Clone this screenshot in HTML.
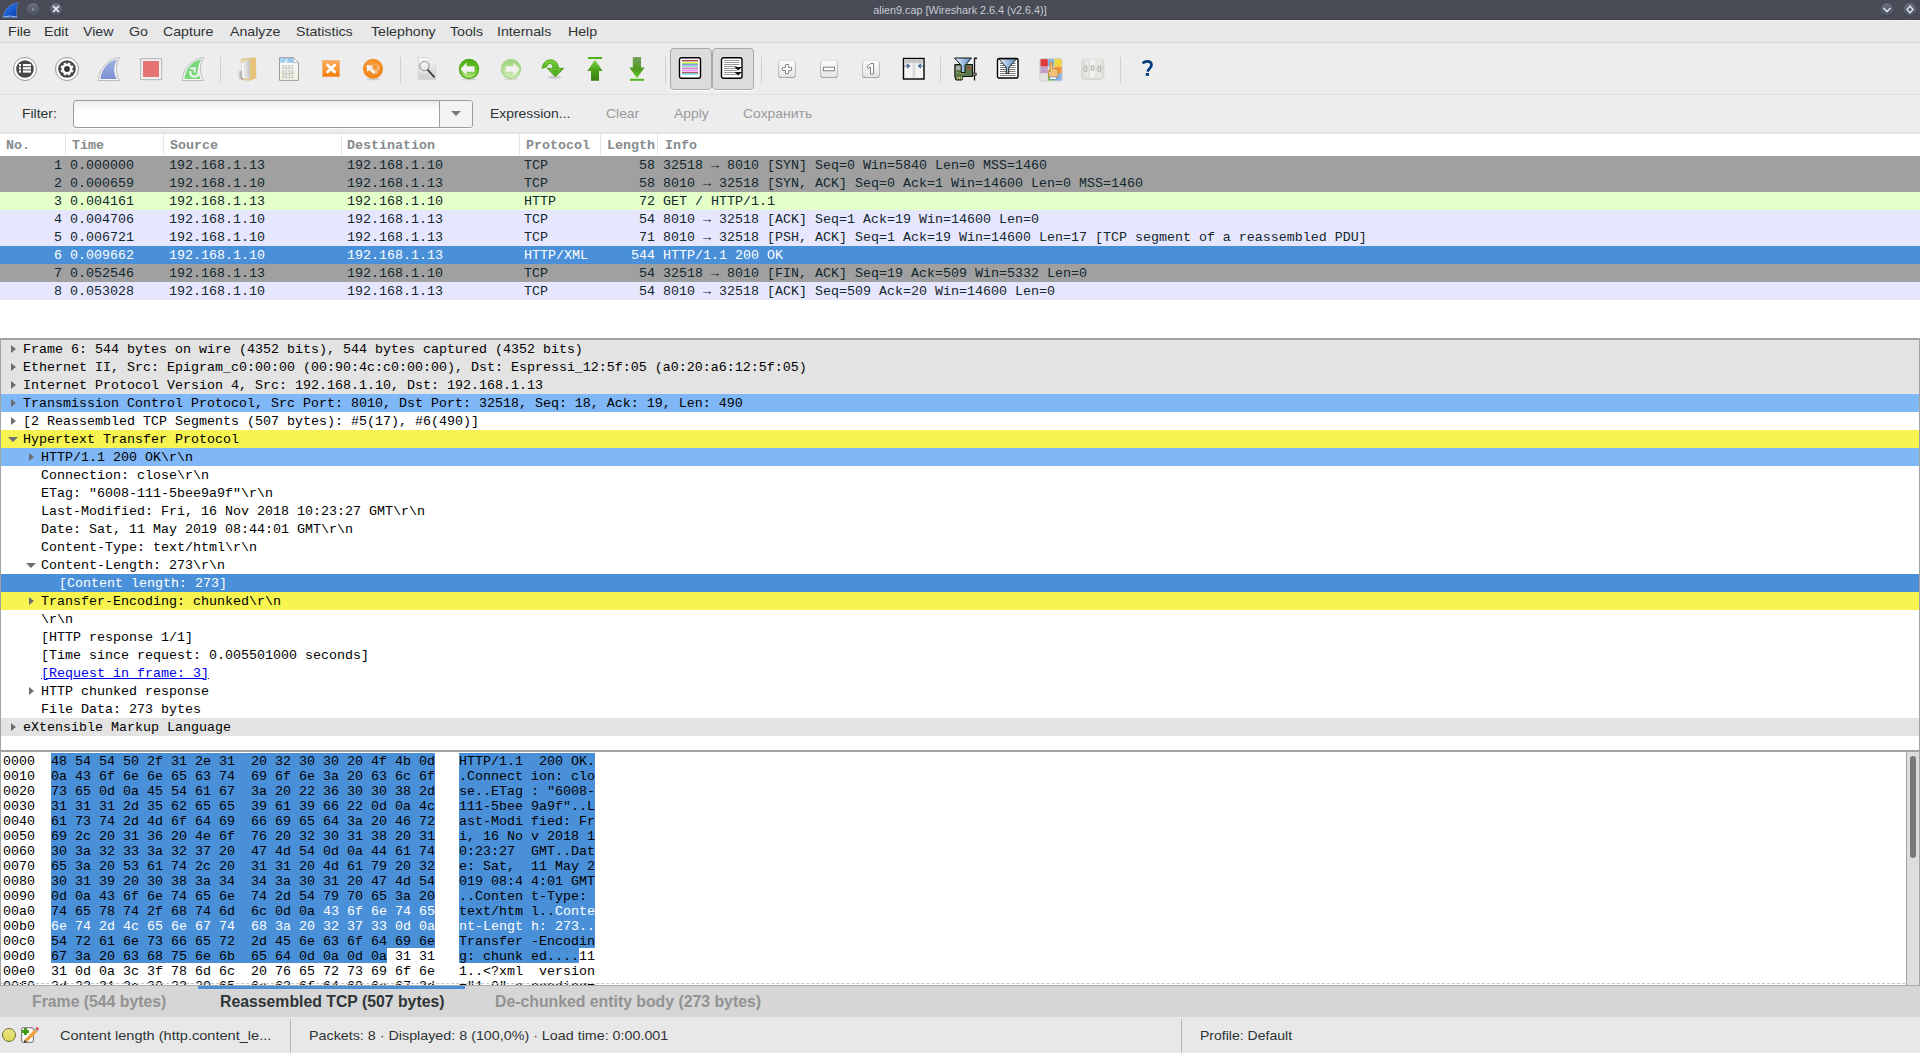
<!DOCTYPE html><html><head><meta charset="utf-8"><title>Wireshark</title><style>
*{margin:0;padding:0;box-sizing:border-box}
html,body{width:1920px;height:1053px;overflow:hidden;background:#ededed;font-family:'Liberation Sans', sans-serif;}
.a{position:absolute}
.t{position:absolute;white-space:pre;line-height:1}
.ui{font-family:'Liberation Sans', sans-serif;font-size:13px;color:#2e3436;transform:scaleX(1.07);transform-origin:0 0}
.mono{font-family:'Liberation Mono', monospace;font-size:13.33px}
.row{position:absolute;left:0;width:1920px;height:18px}
.cell{position:absolute;top:1px;height:18px;line-height:18px;white-space:pre;font-family:'Liberation Mono', monospace;font-size:13.33px;color:#12272e}
.dt{position:absolute;left:1px;width:1918px;height:18px}
.dtx{position:absolute;top:1px;line-height:18px;white-space:pre;font-family:'Liberation Mono', monospace;font-size:13.33px;color:#000}
.hx{position:absolute;left:3px;height:15px;line-height:15px;white-space:pre;font-family:'Liberation Mono', monospace;font-size:13.33px;color:#000}
</style></head><body>
<div class="a" style="left:0;top:0;width:1920px;height:20px;background:#494c57"></div>
<div class="a" style="left:0;top:19px;width:1920px;height:1px;background:#41444e"></div>
<div class="a" style="left:0;top:20px;width:1920px;height:1px;background:#f3f3f3"></div>
<div class="t" style="left:0;top:5px;width:1920px;text-align:center;font-size:10.8px;color:#c6cad2;font-family:'Liberation Sans', sans-serif">alien9.cap [Wireshark 2.6.4 (v2.6.4)]</div>
<div class="a" style="left:0;top:21px;width:1920px;height:21px;background:#e8e8e8"></div>
<div class="a" style="left:0;top:42px;width:1920px;height:1px;background:#d6d6d6"></div>
<div class="t ui" style="left:8px;top:25px;transform:scaleX(1.09)">File</div>
<div class="t ui" style="left:44px;top:25px;transform:scaleX(1.09)">Edit</div>
<div class="t ui" style="left:83px;top:25px;transform:scaleX(1.09)">View</div>
<div class="t ui" style="left:129px;top:25px;transform:scaleX(1.09)">Go</div>
<div class="t ui" style="left:163px;top:25px;transform:scaleX(1.09)">Capture</div>
<div class="t ui" style="left:230px;top:25px;transform:scaleX(1.09)">Analyze</div>
<div class="t ui" style="left:296px;top:25px;transform:scaleX(1.09)">Statistics</div>
<div class="t ui" style="left:371px;top:25px;transform:scaleX(1.09)">Telephony</div>
<div class="t ui" style="left:450px;top:25px;transform:scaleX(1.09)">Tools</div>
<div class="t ui" style="left:497px;top:25px;transform:scaleX(1.09)">Internals</div>
<div class="t ui" style="left:568px;top:25px;transform:scaleX(1.09)">Help</div>
<div class="a" style="left:0;top:43px;width:1920px;height:51px;background:#ededed"></div>
<div class="a" style="left:0;top:94px;width:1920px;height:1px;background:#e2e2e2"></div>
<div class="a" style="left:220px;top:57px;width:1px;height:26px;background:#cfcfcf"></div>
<div class="a" style="left:400px;top:57px;width:1px;height:26px;background:#cfcfcf"></div>
<div class="a" style="left:665px;top:57px;width:1px;height:26px;background:#cfcfcf"></div>
<div class="a" style="left:761px;top:57px;width:1px;height:26px;background:#cfcfcf"></div>
<div class="a" style="left:940px;top:57px;width:1px;height:26px;background:#cfcfcf"></div>
<div class="a" style="left:1120px;top:57px;width:1px;height:26px;background:#cfcfcf"></div>
<div class="a" style="left:0;top:95px;width:1920px;height:38px;background:#ededed"></div>
<div class="a" style="left:0;top:132px;width:1920px;height:2px;background:#e4e4e4"></div>
<div class="t ui" style="left:22px;top:107px">Filter:</div>
<div class="a" style="left:73px;top:100px;width:400px;height:28px;border:1px solid #9d9d9d;border-radius:3px;background:linear-gradient(#ececec,#fbfbfb 30%,#ffffff 80%);box-shadow:0 1px 0 #fafafa"></div>
<div class="a" style="left:440px;top:101px;width:32px;height:26px;background:#f3f3f3;border-radius:0 2px 2px 0"></div>
<div class="a" style="left:439px;top:101px;width:1px;height:26px;background:#9d9d9d"></div>
<div class="a" style="left:451px;top:111px;width:0;height:0;border-left:5px solid transparent;border-right:5px solid transparent;border-top:5px solid #7b7b7b"></div>
<div class="t ui" style="left:490px;top:107px">Expression...</div>
<div class="t ui" style="left:606px;top:107px;color:#9a9a9a">Clear</div>
<div class="t ui" style="left:674px;top:107px;color:#9a9a9a">Apply</div>
<div class="t ui" style="left:743px;top:107px;color:#9a9a9a">Сохранить</div>
<div class="a" style="left:0;top:134px;width:1920px;height:204px;background:#fff"></div>
<div class="t mono" style="left:6px;top:139px;font-weight:bold;color:#858b8d">No.</div>
<div class="t mono" style="left:72px;top:139px;font-weight:bold;color:#858b8d">Time</div>
<div class="t mono" style="left:170px;top:139px;font-weight:bold;color:#858b8d">Source</div>
<div class="t mono" style="left:347px;top:139px;font-weight:bold;color:#858b8d">Destination</div>
<div class="t mono" style="left:526px;top:139px;font-weight:bold;color:#858b8d">Protocol</div>
<div class="t mono" style="left:607px;top:139px;font-weight:bold;color:#858b8d">Length</div>
<div class="t mono" style="left:665px;top:139px;font-weight:bold;color:#858b8d">Info</div>
<div class="a" style="left:65px;top:134px;width:1px;height:21px;background:#e6e6e6"></div>
<div class="a" style="left:163px;top:134px;width:1px;height:21px;background:#e6e6e6"></div>
<div class="a" style="left:341px;top:134px;width:1px;height:21px;background:#e6e6e6"></div>
<div class="a" style="left:519px;top:134px;width:1px;height:21px;background:#e6e6e6"></div>
<div class="a" style="left:600px;top:134px;width:1px;height:21px;background:#e6e6e6"></div>
<div class="a" style="left:657px;top:134px;width:1px;height:21px;background:#e6e6e6"></div>
<div class="row" style="top:156px;background:#a0a0a0">
<div class="cell" style="right:1858px;color:#12272e">1</div>
<div class="cell" style="left:70px;color:#12272e">0.000000</div>
<div class="cell" style="left:169px;color:#12272e">192.168.1.13</div>
<div class="cell" style="left:347px;color:#12272e">192.168.1.10</div>
<div class="cell" style="left:524px;color:#12272e">TCP</div>
<div class="cell" style="right:1265px;color:#12272e">58</div>
<div class="cell" style="left:663px;color:#12272e">32518 → 8010 [SYN] Seq=0 Win=5840 Len=0 MSS=1460</div>
</div>
<div class="row" style="top:174px;background:#a0a0a0">
<div class="cell" style="right:1858px;color:#12272e">2</div>
<div class="cell" style="left:70px;color:#12272e">0.000659</div>
<div class="cell" style="left:169px;color:#12272e">192.168.1.10</div>
<div class="cell" style="left:347px;color:#12272e">192.168.1.13</div>
<div class="cell" style="left:524px;color:#12272e">TCP</div>
<div class="cell" style="right:1265px;color:#12272e">58</div>
<div class="cell" style="left:663px;color:#12272e">8010 → 32518 [SYN, ACK] Seq=0 Ack=1 Win=14600 Len=0 MSS=1460</div>
</div>
<div class="row" style="top:192px;background:#e4ffc7">
<div class="cell" style="right:1858px;color:#12272e">3</div>
<div class="cell" style="left:70px;color:#12272e">0.004161</div>
<div class="cell" style="left:169px;color:#12272e">192.168.1.13</div>
<div class="cell" style="left:347px;color:#12272e">192.168.1.10</div>
<div class="cell" style="left:524px;color:#12272e">HTTP</div>
<div class="cell" style="right:1265px;color:#12272e">72</div>
<div class="cell" style="left:663px;color:#12272e">GET / HTTP/1.1</div>
</div>
<div class="row" style="top:210px;background:#e7e6ff">
<div class="cell" style="right:1858px;color:#12272e">4</div>
<div class="cell" style="left:70px;color:#12272e">0.004706</div>
<div class="cell" style="left:169px;color:#12272e">192.168.1.10</div>
<div class="cell" style="left:347px;color:#12272e">192.168.1.13</div>
<div class="cell" style="left:524px;color:#12272e">TCP</div>
<div class="cell" style="right:1265px;color:#12272e">54</div>
<div class="cell" style="left:663px;color:#12272e">8010 → 32518 [ACK] Seq=1 Ack=19 Win=14600 Len=0</div>
</div>
<div class="row" style="top:228px;background:#e7e6ff">
<div class="cell" style="right:1858px;color:#12272e">5</div>
<div class="cell" style="left:70px;color:#12272e">0.006721</div>
<div class="cell" style="left:169px;color:#12272e">192.168.1.10</div>
<div class="cell" style="left:347px;color:#12272e">192.168.1.13</div>
<div class="cell" style="left:524px;color:#12272e">TCP</div>
<div class="cell" style="right:1265px;color:#12272e">71</div>
<div class="cell" style="left:663px;color:#12272e">8010 → 32518 [PSH, ACK] Seq=1 Ack=19 Win=14600 Len=17 [TCP segment of a reassembled PDU]</div>
</div>
<div class="row" style="top:246px;background:#4a90d9">
<div class="cell" style="right:1858px;color:#ffffff">6</div>
<div class="cell" style="left:70px;color:#ffffff">0.009662</div>
<div class="cell" style="left:169px;color:#ffffff">192.168.1.10</div>
<div class="cell" style="left:347px;color:#ffffff">192.168.1.13</div>
<div class="cell" style="left:524px;color:#ffffff">HTTP/XML</div>
<div class="cell" style="right:1265px;color:#ffffff">544</div>
<div class="cell" style="left:663px;color:#ffffff">HTTP/1.1 200 OK</div>
</div>
<div class="row" style="top:264px;background:#a0a0a0">
<div class="cell" style="right:1858px;color:#12272e">7</div>
<div class="cell" style="left:70px;color:#12272e">0.052546</div>
<div class="cell" style="left:169px;color:#12272e">192.168.1.13</div>
<div class="cell" style="left:347px;color:#12272e">192.168.1.10</div>
<div class="cell" style="left:524px;color:#12272e">TCP</div>
<div class="cell" style="right:1265px;color:#12272e">54</div>
<div class="cell" style="left:663px;color:#12272e">32518 → 8010 [FIN, ACK] Seq=19 Ack=509 Win=5332 Len=0</div>
</div>
<div class="row" style="top:282px;background:#e7e6ff">
<div class="cell" style="right:1858px;color:#12272e">8</div>
<div class="cell" style="left:70px;color:#12272e">0.053028</div>
<div class="cell" style="left:169px;color:#12272e">192.168.1.10</div>
<div class="cell" style="left:347px;color:#12272e">192.168.1.13</div>
<div class="cell" style="left:524px;color:#12272e">TCP</div>
<div class="cell" style="right:1265px;color:#12272e">54</div>
<div class="cell" style="left:663px;color:#12272e">8010 → 32518 [ACK] Seq=509 Ack=20 Win=14600 Len=0</div>
</div>
<div class="a" style="left:0;top:338px;width:1920px;height:2px;background:#a3a3a3"></div>
<div class="a" style="left:0;top:340px;width:1920px;height:411px;background:#fff;border-left:1px solid #a3a3a3;border-right:1px solid #a3a3a3"></div>
<div class="dt" style="top:340px;background:#e3e3e3">
<div class="a" style="left:9.5px;top:4.5px;width:0;height:0;border-top:4.6px solid transparent;border-bottom:4.6px solid transparent;border-left:5.2px solid #6b6f72"></div>
<div class="dtx" style="left:22px;color:#000">Frame 6: 544 bytes on wire (4352 bits), 544 bytes captured (4352 bits)</div>
</div>
<div class="dt" style="top:358px;background:#e3e3e3">
<div class="a" style="left:9.5px;top:4.5px;width:0;height:0;border-top:4.6px solid transparent;border-bottom:4.6px solid transparent;border-left:5.2px solid #6b6f72"></div>
<div class="dtx" style="left:22px;color:#000">Ethernet II, Src: Epigram_c0:00:00 (00:90:4c:c0:00:00), Dst: Espressi_12:5f:05 (a0:20:a6:12:5f:05)</div>
</div>
<div class="dt" style="top:376px;background:#e3e3e3">
<div class="a" style="left:9.5px;top:4.5px;width:0;height:0;border-top:4.6px solid transparent;border-bottom:4.6px solid transparent;border-left:5.2px solid #6b6f72"></div>
<div class="dtx" style="left:22px;color:#000">Internet Protocol Version 4, Src: 192.168.1.10, Dst: 192.168.1.13</div>
</div>
<div class="dt" style="top:394px;background:#80b7f7">
<div class="a" style="left:9.5px;top:4.5px;width:0;height:0;border-top:4.6px solid transparent;border-bottom:4.6px solid transparent;border-left:5.2px solid #6b6f72"></div>
<div class="dtx" style="left:22px;color:#000">Transmission Control Protocol, Src Port: 8010, Dst Port: 32518, Seq: 18, Ack: 19, Len: 490</div>
</div>
<div class="dt" style="top:412px;background:#ffffff">
<div class="a" style="left:9.5px;top:4.5px;width:0;height:0;border-top:4.6px solid transparent;border-bottom:4.6px solid transparent;border-left:5.2px solid #6b6f72"></div>
<div class="dtx" style="left:22px;color:#000">[2 Reassembled TCP Segments (507 bytes): #5(17), #6(490)]</div>
</div>
<div class="dt" style="top:430px;background:#f7f34f">
<div class="a" style="left:6.5px;top:7px;width:0;height:0;border-left:5px solid transparent;border-right:5px solid transparent;border-top:5px solid #6b6f72"></div>
<div class="dtx" style="left:22px;color:#000">Hypertext Transfer Protocol</div>
</div>
<div class="dt" style="top:448px;background:#80b7f7">
<div class="a" style="left:27.5px;top:4.5px;width:0;height:0;border-top:4.6px solid transparent;border-bottom:4.6px solid transparent;border-left:5.2px solid #6b6f72"></div>
<div class="dtx" style="left:40px;color:#000">HTTP/1.1 200 OK\r\n</div>
</div>
<div class="dt" style="top:466px;background:#ffffff">
<div class="dtx" style="left:40px;color:#000">Connection: close\r\n</div>
</div>
<div class="dt" style="top:484px;background:#ffffff">
<div class="dtx" style="left:40px;color:#000">ETag: &quot;6008-111-5bee9a9f&quot;\r\n</div>
</div>
<div class="dt" style="top:502px;background:#ffffff">
<div class="dtx" style="left:40px;color:#000">Last-Modified: Fri, 16 Nov 2018 10:23:27 GMT\r\n</div>
</div>
<div class="dt" style="top:520px;background:#ffffff">
<div class="dtx" style="left:40px;color:#000">Date: Sat, 11 May 2019 08:44:01 GMT\r\n</div>
</div>
<div class="dt" style="top:538px;background:#ffffff">
<div class="dtx" style="left:40px;color:#000">Content-Type: text/html\r\n</div>
</div>
<div class="dt" style="top:556px;background:#ffffff">
<div class="a" style="left:24.5px;top:7px;width:0;height:0;border-left:5px solid transparent;border-right:5px solid transparent;border-top:5px solid #6b6f72"></div>
<div class="dtx" style="left:40px;color:#000">Content-Length: 273\r\n</div>
</div>
<div class="dt" style="top:574px;background:#4a90d9">
<div class="dtx" style="left:58px;color:#fff">[Content length: 273]</div>
</div>
<div class="dt" style="top:592px;background:#f7f34f">
<div class="a" style="left:27.5px;top:4.5px;width:0;height:0;border-top:4.6px solid transparent;border-bottom:4.6px solid transparent;border-left:5.2px solid #6b6f72"></div>
<div class="dtx" style="left:40px;color:#000">Transfer-Encoding: chunked\r\n</div>
</div>
<div class="dt" style="top:610px;background:#ffffff">
<div class="dtx" style="left:40px;color:#000">\r\n</div>
</div>
<div class="dt" style="top:628px;background:#ffffff">
<div class="dtx" style="left:40px;color:#000">[HTTP response 1/1]</div>
</div>
<div class="dt" style="top:646px;background:#ffffff">
<div class="dtx" style="left:40px;color:#000">[Time since request: 0.005501000 seconds]</div>
</div>
<div class="dt" style="top:664px;background:#ffffff">
<div class="dtx" style="left:40px;color:#0000ee;text-decoration:underline">[Request in frame: 3]</div>
</div>
<div class="dt" style="top:682px;background:#ffffff">
<div class="a" style="left:27.5px;top:4.5px;width:0;height:0;border-top:4.6px solid transparent;border-bottom:4.6px solid transparent;border-left:5.2px solid #6b6f72"></div>
<div class="dtx" style="left:40px;color:#000">HTTP chunked response</div>
</div>
<div class="dt" style="top:700px;background:#ffffff">
<div class="dtx" style="left:40px;color:#000">File Data: 273 bytes</div>
</div>
<div class="dt" style="top:718px;background:#e3e3e3">
<div class="a" style="left:9.5px;top:4.5px;width:0;height:0;border-top:4.6px solid transparent;border-bottom:4.6px solid transparent;border-left:5.2px solid #6b6f72"></div>
<div class="dtx" style="left:22px;color:#000">eXtensible Markup Language</div>
</div>
<div class="a" style="left:0;top:750px;width:1920px;height:2px;background:#a3a3a3"></div>
<div class="a" style="left:0;top:752px;width:1920px;height:233px;background:#fff;border-left:1px solid #a3a3a3"></div>
<div class="hx" style="top:754px">0000</div>
<div class="a" style="left:51.0px;top:753px;width:384.0px;height:15px;background:#4a90d9"></div>
<div class="a" style="left:459.0px;top:753px;width:136.0px;height:15px;background:#4a90d9"></div>
<div class="hx" style="top:754px;left:51.0px">48 54 54 50 2f 31 2e 31  20 32 30 30 20 4f 4b 0d</div>
<div class="hx" style="top:754px;left:459.0px">HTTP/1.1  200 OK.</div>
<div class="hx" style="top:769px">0010</div>
<div class="a" style="left:51.0px;top:768px;width:384.0px;height:15px;background:#4a90d9"></div>
<div class="a" style="left:459.0px;top:768px;width:136.0px;height:15px;background:#4a90d9"></div>
<div class="hx" style="top:769px;left:51.0px">0a 43 6f 6e 6e 65 63 74  69 6f 6e 3a 20 63 6c 6f</div>
<div class="hx" style="top:769px;left:459.0px">.Connect ion: clo</div>
<div class="hx" style="top:784px">0020</div>
<div class="a" style="left:51.0px;top:783px;width:384.0px;height:15px;background:#4a90d9"></div>
<div class="a" style="left:459.0px;top:783px;width:136.0px;height:15px;background:#4a90d9"></div>
<div class="hx" style="top:784px;left:51.0px">73 65 0d 0a 45 54 61 67  3a 20 22 36 30 30 38 2d</div>
<div class="hx" style="top:784px;left:459.0px">se..ETag : &quot;6008-</div>
<div class="hx" style="top:799px">0030</div>
<div class="a" style="left:51.0px;top:798px;width:384.0px;height:15px;background:#4a90d9"></div>
<div class="a" style="left:459.0px;top:798px;width:136.0px;height:15px;background:#4a90d9"></div>
<div class="hx" style="top:799px;left:51.0px">31 31 31 2d 35 62 65 65  39 61 39 66 22 0d 0a 4c</div>
<div class="hx" style="top:799px;left:459.0px">111-5bee 9a9f&quot;..L</div>
<div class="hx" style="top:814px">0040</div>
<div class="a" style="left:51.0px;top:813px;width:384.0px;height:15px;background:#4a90d9"></div>
<div class="a" style="left:459.0px;top:813px;width:136.0px;height:15px;background:#4a90d9"></div>
<div class="hx" style="top:814px;left:51.0px">61 73 74 2d 4d 6f 64 69  66 69 65 64 3a 20 46 72</div>
<div class="hx" style="top:814px;left:459.0px">ast-Modi fied: Fr</div>
<div class="hx" style="top:829px">0050</div>
<div class="a" style="left:51.0px;top:828px;width:384.0px;height:15px;background:#4a90d9"></div>
<div class="a" style="left:459.0px;top:828px;width:136.0px;height:15px;background:#4a90d9"></div>
<div class="hx" style="top:829px;left:51.0px">69 2c 20 31 36 20 4e 6f  76 20 32 30 31 38 20 31</div>
<div class="hx" style="top:829px;left:459.0px">i, 16 No v 2018 1</div>
<div class="hx" style="top:844px">0060</div>
<div class="a" style="left:51.0px;top:843px;width:384.0px;height:15px;background:#4a90d9"></div>
<div class="a" style="left:459.0px;top:843px;width:136.0px;height:15px;background:#4a90d9"></div>
<div class="hx" style="top:844px;left:51.0px">30 3a 32 33 3a 32 37 20  47 4d 54 0d 0a 44 61 74</div>
<div class="hx" style="top:844px;left:459.0px">0:23:27  GMT..Dat</div>
<div class="hx" style="top:859px">0070</div>
<div class="a" style="left:51.0px;top:858px;width:384.0px;height:15px;background:#4a90d9"></div>
<div class="a" style="left:459.0px;top:858px;width:136.0px;height:15px;background:#4a90d9"></div>
<div class="hx" style="top:859px;left:51.0px">65 3a 20 53 61 74 2c 20  31 31 20 4d 61 79 20 32</div>
<div class="hx" style="top:859px;left:459.0px">e: Sat,  11 May 2</div>
<div class="hx" style="top:874px">0080</div>
<div class="a" style="left:51.0px;top:873px;width:384.0px;height:15px;background:#4a90d9"></div>
<div class="a" style="left:459.0px;top:873px;width:136.0px;height:15px;background:#4a90d9"></div>
<div class="hx" style="top:874px;left:51.0px">30 31 39 20 30 38 3a 34  34 3a 30 31 20 47 4d 54</div>
<div class="hx" style="top:874px;left:459.0px">019 08:4 4:01 GMT</div>
<div class="hx" style="top:889px">0090</div>
<div class="a" style="left:51.0px;top:888px;width:384.0px;height:15px;background:#4a90d9"></div>
<div class="a" style="left:459.0px;top:888px;width:136.0px;height:15px;background:#4a90d9"></div>
<div class="hx" style="top:889px;left:51.0px">0d 0a 43 6f 6e 74 65 6e  74 2d 54 79 70 65 3a 20</div>
<div class="hx" style="top:889px;left:459.0px">..Conten t-Type: </div>
<div class="hx" style="top:904px">00a0</div>
<div class="a" style="left:51.0px;top:903px;width:384.0px;height:15px;background:#4a90d9"></div>
<div class="a" style="left:459.0px;top:903px;width:136.0px;height:15px;background:#4a90d9"></div>
<div class="hx" style="top:904px;left:51.0px">74 65 78 74 2f 68 74 6d  6c 0d 0a <span style="color:#fff">43</span> <span style="color:#fff">6f</span> <span style="color:#fff">6e</span> <span style="color:#fff">74</span> <span style="color:#fff">65</span></div>
<div class="hx" style="top:904px;left:459.0px">text/htm l..<span style="color:#fff">C</span><span style="color:#fff">o</span><span style="color:#fff">n</span><span style="color:#fff">t</span><span style="color:#fff">e</span></div>
<div class="hx" style="top:919px">00b0</div>
<div class="a" style="left:51.0px;top:918px;width:384.0px;height:15px;background:#4a90d9"></div>
<div class="a" style="left:459.0px;top:918px;width:136.0px;height:15px;background:#4a90d9"></div>
<div class="hx" style="top:919px;left:51.0px"><span style="color:#fff">6e</span> <span style="color:#fff">74</span> <span style="color:#fff">2d</span> <span style="color:#fff">4c</span> <span style="color:#fff">65</span> <span style="color:#fff">6e</span> <span style="color:#fff">67</span> <span style="color:#fff">74</span>  <span style="color:#fff">68</span> <span style="color:#fff">3a</span> <span style="color:#fff">20</span> <span style="color:#fff">32</span> <span style="color:#fff">37</span> <span style="color:#fff">33</span> <span style="color:#fff">0d</span> <span style="color:#fff">0a</span></div>
<div class="hx" style="top:919px;left:459.0px"><span style="color:#fff">n</span><span style="color:#fff">t</span><span style="color:#fff">-</span><span style="color:#fff">L</span><span style="color:#fff">e</span><span style="color:#fff">n</span><span style="color:#fff">g</span><span style="color:#fff">t</span> <span style="color:#fff">h</span><span style="color:#fff">:</span><span style="color:#fff"> </span><span style="color:#fff">2</span><span style="color:#fff">7</span><span style="color:#fff">3</span><span style="color:#fff">.</span><span style="color:#fff">.</span></div>
<div class="hx" style="top:934px">00c0</div>
<div class="a" style="left:51.0px;top:933px;width:384.0px;height:15px;background:#4a90d9"></div>
<div class="a" style="left:459.0px;top:933px;width:136.0px;height:15px;background:#4a90d9"></div>
<div class="hx" style="top:934px;left:51.0px">54 72 61 6e 73 66 65 72  2d 45 6e 63 6f 64 69 6e</div>
<div class="hx" style="top:934px;left:459.0px">Transfer -Encodin</div>
<div class="hx" style="top:949px">00d0</div>
<div class="a" style="left:51.0px;top:948px;width:336.0px;height:15px;background:#4a90d9"></div>
<div class="a" style="left:459.0px;top:948px;width:120.0px;height:15px;background:#4a90d9"></div>
<div class="hx" style="top:949px;left:51.0px">67 3a 20 63 68 75 6e 6b  65 64 0d 0a 0d 0a 31 31</div>
<div class="hx" style="top:949px;left:459.0px">g: chunk ed....11</div>
<div class="hx" style="top:964px">00e0</div>
<div class="hx" style="top:964px;left:51.0px">31 0d 0a 3c 3f 78 6d 6c  20 76 65 72 73 69 6f 6e</div>
<div class="hx" style="top:964px;left:459.0px">1..&lt;?xml  version</div>
<div class="hx" style="top:979px">00f0</div>
<div class="hx" style="top:979px;left:51.0px">3d 22 31 2e 30 22 20 65  6e 63 6f 64 69 6e 67 3d</div>
<div class="hx" style="top:979px;left:459.0px">=&quot;1.0&quot; e ncoding=</div>
<div class="a" style="left:1px;top:985px;width:1920px;height:2px;background:#fff"></div>
<div class="a" style="left:1px;top:983px;width:1904px;height:1px;border-top:1px dashed #c4c4c4"></div>
<div class="a" style="left:1906px;top:752px;width:14px;height:233px;background:#dedede;border-left:1px solid #a3a3a3;border-right:1px solid #a3a3a3"></div>
<div class="a" style="left:1910px;top:756px;width:6px;height:102px;border-radius:3px;background:#777b7c"></div>
<div class="a" style="left:0;top:985px;width:1920px;height:32px;background:#d6d6d6"></div>
<div class="a" style="left:0;top:985px;width:1920px;height:1px;background:#a8a8a8"></div>
<div class="a" style="left:198px;top:986px;width:267px;height:3px;background:#4a90d9"></div>
<div class="t" style="left:32px;top:994px;font-family:'Liberation Sans', sans-serif;font-weight:bold;font-size:15.8px;color:#929292">Frame (544 bytes)</div>
<div class="t" style="left:220px;top:994px;font-family:'Liberation Sans', sans-serif;font-weight:bold;font-size:15.8px;color:#2e3436">Reassembled TCP (507 bytes)</div>
<div class="t" style="left:495px;top:994px;font-family:'Liberation Sans', sans-serif;font-weight:bold;font-size:15.8px;color:#929292">De-chunked entity body (273 bytes)</div>
<div class="a" style="left:0;top:1017px;width:1920px;height:36px;background:#e8e8e8"></div>
<div class="a" style="left:290px;top:1019px;width:1px;height:34px;background:#b5b5b5"></div>
<div class="a" style="left:1181px;top:1019px;width:1px;height:34px;background:#b5b5b5"></div>
<div class="t ui" style="left:60px;top:1029px;transform:scaleX(1.12)">Content length (http.content_le...</div>
<div class="t ui" style="left:309px;top:1029px;transform:scaleX(1.1)">Packets: 8 · Displayed: 8 (100,0%) · Load time: 0:00.001</div>
<div class="t ui" style="left:1200px;top:1029px;transform:scaleX(1.08)">Profile: Default</div>
<svg class="a" style="left:1px;top:1px" width="19" height="18" viewBox="0 0 19 18"><defs><linearGradient id="tf" x1="0" y1="0" x2="1" y2="1"><stop offset="0" stop-color="#2f7ff0"/><stop offset="1" stop-color="#0a3fb0"/></linearGradient></defs>
<path d="M2 16.5 C3 9 8 3 17 1.5 C15.5 6 15 11 16 16.5 Z" fill="url(#tf)" stroke="#6f86b8" stroke-width="0.6"/>
<path d="M2.5 16 Q9 14 16 16" stroke="#9fb6e8" stroke-width="1" fill="none"/></svg>
<svg class="a" style="left:24.5px;top:1px" width="16" height="17" viewBox="0 0 16 17"><defs><linearGradient id="tb32" x1="0" y1="0" x2="0" y2="1"><stop offset="0" stop-color="#677080"/><stop offset="1" stop-color="#4b505c"/></linearGradient></defs>
<circle cx="8" cy="8.5" r="7.2" fill="#3a3d45"/><circle cx="8" cy="8.3" r="6.6" fill="url(#tb32)"/><rect x="7.5" y="7.5" width="1" height="2" fill="#d0d4dc"/></svg>
<svg class="a" style="left:47.5px;top:1px" width="16" height="17" viewBox="0 0 16 17"><defs><linearGradient id="tb55" x1="0" y1="0" x2="0" y2="1"><stop offset="0" stop-color="#677080"/><stop offset="1" stop-color="#4b505c"/></linearGradient></defs>
<circle cx="8" cy="8.5" r="7.2" fill="#3a3d45"/><circle cx="8" cy="8.3" r="6.6" fill="url(#tb55)"/><path d="M5 5 L11 11 M11 5 L5 11" stroke="#dde3ee" stroke-width="1.8"/></svg>
<svg class="a" style="left:1878.5px;top:1px" width="16" height="17" viewBox="0 0 16 17"><defs><linearGradient id="tr1886" x1="0" y1="0" x2="0" y2="1"><stop offset="0" stop-color="#677080"/><stop offset="1" stop-color="#4b505c"/></linearGradient></defs>
<circle cx="8" cy="8.5" r="7.2" fill="#3a3d45"/><circle cx="8" cy="8.3" r="6.6" fill="url(#tr1886)"/><path d="M4.5 7 L8 10.5 L11.5 7" stroke="#dde3ee" stroke-width="1.6" fill="none"/></svg>
<svg class="a" style="left:1901.5px;top:1px" width="16" height="17" viewBox="0 0 16 17"><defs><linearGradient id="tr1909" x1="0" y1="0" x2="0" y2="1"><stop offset="0" stop-color="#677080"/><stop offset="1" stop-color="#4b505c"/></linearGradient></defs>
<circle cx="8" cy="8.5" r="7.2" fill="#3a3d45"/><circle cx="8" cy="8.3" r="6.6" fill="url(#tr1909)"/><path d="M8 5 L11 8.5 L8 12 L5 8.5 Z" stroke="#dde3ee" stroke-width="1.4" fill="none"/></svg>
<svg class="a" style="left:13px;top:57px" width="24" height="24" viewBox="0 0 24 24"><circle cx="12" cy="12" r="11.5" fill="#fff" stroke="#8a8a8a" stroke-width="0.9"/>
<circle cx="12" cy="12" r="8.8" fill="#474747"/>
<g fill="#fff"><rect x="6" y="7" width="2" height="2.2"/><rect x="6" y="10.2" width="2" height="2.2"/><rect x="6" y="13.4" width="2" height="2.2"/>
<rect x="10" y="7" width="8" height="2.2"/><rect x="10" y="10.2" width="8" height="2.2"/><rect x="10" y="13.4" width="8" height="2.2"/></g></svg>
<svg class="a" style="left:55px;top:57px" width="24" height="24" viewBox="0 0 24 24"><circle cx="12" cy="12" r="11.5" fill="#fff" stroke="#8a8a8a" stroke-width="0.9"/>
<circle cx="12" cy="12" r="8.8" fill="#474747"/>
<circle cx="12" cy="12" r="5.5" fill="#fff"/><rect x="11" y="5.3" width="2" height="1.6" fill="#fff" transform="rotate(22.5 12 12)"/><rect x="11" y="5.3" width="2" height="1.6" fill="#fff" transform="rotate(67.5 12 12)"/><rect x="11" y="5.3" width="2" height="1.6" fill="#fff" transform="rotate(112.5 12 12)"/><rect x="11" y="5.3" width="2" height="1.6" fill="#fff" transform="rotate(157.5 12 12)"/><rect x="11" y="5.3" width="2" height="1.6" fill="#fff" transform="rotate(202.5 12 12)"/><rect x="11" y="5.3" width="2" height="1.6" fill="#fff" transform="rotate(247.5 12 12)"/><rect x="11" y="5.3" width="2" height="1.6" fill="#fff" transform="rotate(292.5 12 12)"/><rect x="11" y="5.3" width="2" height="1.6" fill="#fff" transform="rotate(337.5 12 12)"/><circle cx="12" cy="12" r="2.9" fill="#333"/></svg>
<svg class="a" style="left:97px;top:57px" width="24" height="24" viewBox="0 0 24 24"><defs><linearGradient id="fb" x1="0" y1="0" x2="0" y2="1"><stop offset="0" stop-color="#a2b2e4"/><stop offset="1" stop-color="#7b91d0"/></linearGradient></defs>
<path d="M1.2 23.5 C2 13 9 2.5 23 0.2 C18.8 6 17.8 15 22.5 23.5 Z" fill="#f6f6f6" stroke="#bdbdbd" stroke-width="1"/><path d="M3.4 22 C4.3 13 10 4 20.6 2.2 C16.8 7.5 15.9 15 19.8 22 Z" fill="url(#fb)"/></svg>
<svg class="a" style="left:139px;top:58px" width="24" height="23" viewBox="0 0 24 23"><rect x="1.6" y="0.6" width="21" height="21" fill="#f2f2f2" stroke="#bdbdbd" stroke-width="1.2"/>
<rect x="4" y="3" width="16" height="16" fill="#e57373"/></svg>
<svg class="a" style="left:181px;top:57px" width="24" height="24" viewBox="0 0 24 24"><path d="M1.2 23.5 C2 13 9 2.5 23 0.2 C18.8 6 17.8 15 22.5 23.5 Z" fill="#f6f6f6" stroke="#bdbdbd" stroke-width="1"/><path d="M3.4 22 C4.3 13 10 4 20.6 2.2 C16.8 7.5 15.9 15 19.8 22 Z" fill="#7ad87a"/>
<path d="M9.45 14.07 A4.2 4.2 0 1 0 17.04 13.4" stroke="#f2f2f2" stroke-width="2.2" fill="none"/>
<path d="M13.7 10.6 V15.6" stroke="#f2f2f2" stroke-width="1.8"/>
<rect x="9.2" y="10.4" width="5.4" height="2" fill="#f2f2f2"/></svg>
<svg class="a" style="left:234px;top:57px" width="24" height="24" viewBox="0 0 24 24"><defs><linearGradient id="fo" x1="0" y1="0" x2="1" y2="0"><stop offset="0" stop-color="#f4dca4"/><stop offset="1" stop-color="#e2bb6a"/></linearGradient>
<linearGradient id="fp" x1="0" y1="0" x2="1" y2="0"><stop offset="0" stop-color="#fafafa"/><stop offset="1" stop-color="#c8c8c8"/></linearGradient>
<linearGradient id="fs" x1="0" y1="0" x2="1" y2="0"><stop offset="0" stop-color="#eeeeee" stop-opacity="0.3"/><stop offset="1" stop-color="#555" stop-opacity="0.8"/></linearGradient></defs>
<path d="M7.5 2 L21.5 0.8 L22 21 L15 23.4 L8 22.5 Z" fill="url(#fo)" stroke="#d8b068" stroke-width="0.5"/>
<path d="M3 14.5 L8 13.5 L9 22.5 L4.5 22 Z" fill="url(#fs)"/>
<path d="M7.2 6 L11 4.5 L11.5 21.5 L8 21 Z" fill="#f2f2f2" stroke="#cfcfcf" stroke-width="0.4"/>
<path d="M10.5 3.5 L15.5 3 L16 22 L11 21.5 Z" fill="url(#fp)" stroke="#bdbdbd" stroke-width="0.4"/>
<g stroke="#b0b0b0" stroke-width="0.5"><path d="M11.5 6 H15 M11.5 8 H15 M11.5 10 H15 M11.5 12 H15 M11.5 14 H15 M11.5 16 H15 M11.5 18 H15"/></g>
<path d="M16.5 2.5 L21.5 0.8 L22 21 L16.5 23 Z" fill="#e7c47a"/></svg>
<svg class="a" style="left:277px;top:57px" width="24" height="25" viewBox="0 0 24 25"><defs><linearGradient id="dg" x1="0" y1="0" x2="0" y2="1"><stop offset="0" stop-color="#fbfbfb"/><stop offset="1" stop-color="#efefe2"/></linearGradient>
<linearGradient id="db" x1="0" y1="0" x2="1" y2="0"><stop offset="0" stop-color="#a6d2f0"/><stop offset="1" stop-color="#8cc4ec"/></linearGradient></defs>
<path d="M2.5 0.6 H16.5 L21.5 5.6 V23.4 H2.5 Z" fill="url(#dg)" stroke="#9d9d9d" stroke-width="1"/>
<path d="M3 1.1 H16.3 L20.5 5.3 V5.8 H3 Z" fill="url(#db)"/>
<path d="M7.5 5.8 C8 3.5 9 2.2 11 1.5 C10 3 10 4.5 10.3 5.8 Z" fill="#e6f2fa"/>
<path d="M16.3 0.6 V5.6 H21.5 Z" fill="#ffffff" stroke="#9d9d9d" stroke-width="0.6"/>
<g font-family="Liberation Mono" font-size="5" fill="#a9a99f"><text x="4.8" y="12.2">0101</text><text x="4.8" y="16.8">0110</text><text x="4.8" y="21.4">0111</text></g></svg>
<svg class="a" style="left:320px;top:59px" width="22" height="22" viewBox="0 0 22 22"><defs><linearGradient id="ox" x1="0" y1="0" x2="0" y2="1"><stop offset="0" stop-color="#faa956"/><stop offset="0.5" stop-color="#f89a3a"/><stop offset="1" stop-color="#f57900"/></linearGradient></defs>
<rect x="2.6" y="1.4" width="17" height="16.4" fill="url(#ox)" stroke="#e8b27a" stroke-width="0.6"/>
<path d="M6.8 5.2 L15.4 13.8 M15.4 5.2 L6.8 13.8" stroke="#fff" stroke-width="2.8"/></svg>
<svg class="a" style="left:361px;top:57px" width="24" height="24" viewBox="0 0 24 24"><defs><radialGradient id="or" cx="0.45" cy="0.35" r="0.75"><stop offset="0" stop-color="#f9a040"/><stop offset="1" stop-color="#f07a0a"/></radialGradient></defs>
<ellipse cx="12" cy="22.2" rx="7" ry="1.1" fill="#6a7a8a" opacity="0.25"/>
<circle cx="12" cy="11.7" r="10" fill="url(#or)"/>
<path d="M13 6.5 L18.5 13.5 L18.8 9 Z M14 8 L16.5 7 L18 10" fill="#f8cfa0" opacity="0.8"/>
<path d="M10.5 9 L14.5 13 L16.5 11 L17.3 16.8 L11.5 16 L13.5 14 L9.5 10 Z" fill="#f7c89a" opacity="0.7"/>
<path d="M5.5 8 L12.5 8.8 L10.4 10.9 L14.8 15.3 L12.8 17.3 L8.4 12.9 L6.3 15 Z" fill="#f4f4f4"/></svg>
<svg class="a" style="left:417px;top:57px" width="22" height="24" viewBox="0 0 22 24"><defs><linearGradient id="fd" x1="0" y1="0" x2="0" y2="1"><stop offset="0" stop-color="#fbfbfb"/><stop offset="1" stop-color="#d2d2d0"/></linearGradient>
<linearGradient id="fl" x1="0" y1="0" x2="0" y2="1"><stop offset="0" stop-color="#fafafa"/><stop offset="1" stop-color="#e2e2ea"/></linearGradient></defs>
<path d="M1.3 0.6 H11.8 L18.6 7.2 V22.6 H1.3 Z" fill="url(#fd)" stroke="#cdcdcd" stroke-width="0.8"/>
<path d="M11.8 0.6 V7.2 H18.6" fill="#f0f0f0" stroke="#cfcfcf" stroke-width="0.6"/>
<g stroke="#c4c4c4" stroke-width="0.7"><path d="M12 11 H17 M12 13.5 H17 M3 17.5 H13 M3 20 H13"/></g>
<circle cx="7.4" cy="9" r="4.6" fill="url(#fl)" stroke="#8a8a8a" stroke-width="1"/>
<path d="M10.5 12.6 L17.6 20.4" stroke="#383838" stroke-width="1.7"/></svg>
<svg class="a" style="left:457px;top:57px" width="24" height="24" viewBox="0 0 24 24"><defs><linearGradient id="gb" x1="0" y1="0" x2="0" y2="1"><stop offset="0" stop-color="#4eae12"/><stop offset="0.55" stop-color="#6cc432"/><stop offset="1" stop-color="#b6e488"/></linearGradient></defs>
<ellipse cx="12" cy="22.3" rx="7" ry="1" fill="#000" opacity="0.12"/>
<circle cx="12" cy="12" r="10.2" fill="#4aaa12"/><circle cx="12" cy="12" r="8.8" fill="url(#gb)"/>
<path d="M3.5 12 L9.6 5.6 V9.2 H17.5 V14.8 H9.6 V18.4 Z" fill="#f2f2f2"/></svg>
<svg class="a" style="left:499px;top:57px" width="24" height="24" viewBox="0 0 24 24"><defs><linearGradient id="gf" x1="0" y1="0" x2="0" y2="1"><stop offset="0" stop-color="#9ed47a"/><stop offset="1" stop-color="#cfeab3"/></linearGradient></defs>
<ellipse cx="12" cy="22.3" rx="7" ry="1" fill="#000" opacity="0.08"/>
<circle cx="12" cy="12" r="10.2" fill="#a6d98a"/><circle cx="12" cy="12" r="8.8" fill="url(#gf)"/>
<path d="M20.5 12 L14.4 5.6 V9.2 H6.5 V14.8 H14.4 V18.4 Z" fill="#f2f2f2"/></svg>
<svg class="a" style="left:541px;top:57px" width="24" height="24" viewBox="0 0 24 24"><defs><linearGradient id="gc" x1="0" y1="0" x2="0" y2="1"><stop offset="0" stop-color="#7ad23a"/><stop offset="1" stop-color="#3d9a0a"/></linearGradient></defs>
<ellipse cx="13.5" cy="20.3" rx="7" ry="1.8" fill="#000" opacity="0.13"/>
<path d="M1.1 11.3 C2 5 6 2.8 9.6 2.8 C14 2.8 17.2 6 17.7 11.3 L22.8 11.3 L14.3 19.7 L6.2 11.3 L12.2 11.3 C11.5 8.5 10.5 6.5 9.5 6.5 C7.5 6.5 6.2 8 5.8 9.9 Z" fill="url(#gc)" stroke="#3a8f08" stroke-width="0.7"/>
<path d="M9.5 12.5 L19.5 12.5 L14.3 17.8 Z" fill="none" stroke="#8ad85a" stroke-width="0.6"/></svg>
<svg class="a" style="left:583px;top:57px" width="24" height="25" viewBox="0 0 24 25"><defs><linearGradient id="gu" x1="0" y1="0" x2="0" y2="1"><stop offset="0" stop-color="#7fd84a"/><stop offset="0.5" stop-color="#4ba018"/><stop offset="1" stop-color="#3b7d0e"/></linearGradient></defs>
<rect x="5" y="0" width="14" height="2" fill="#4fb318"/>
<path d="M12 2.8 L19.7 14 H16 V23.8 H8 V14 H4.3 Z" fill="url(#gu)"/></svg>
<svg class="a" style="left:625px;top:57px" width="24" height="25" viewBox="0 0 24 25"><defs><linearGradient id="gd" x1="0" y1="0" x2="0" y2="1"><stop offset="0" stop-color="#7aa062"/><stop offset="0.6" stop-color="#4e9a1e"/><stop offset="1" stop-color="#5fd02a"/></linearGradient></defs>
<path d="M7.8 0 H16 V10.5 H19.7 L12 21 L4.3 10.5 H7.8 Z" fill="url(#gd)"/>
<rect x="5" y="21.8" width="14" height="2" fill="#4fb318"/></svg>
<div class="a" style="left:670px;top:48px;width:42px;height:42px;border:1px solid #a9a9a9;border-radius:4px;background:#dcdcdc;box-shadow:0 1px 0 #fff"></div>
<div class="a" style="left:712px;top:48px;width:42px;height:42px;border:1px solid #a9a9a9;border-radius:4px;background:#dcdcdc;box-shadow:0 1px 0 #fff"></div>
<svg class="a" style="left:678px;top:57px" width="24" height="22" viewBox="0 0 24 22"><rect x="1.5" y="0.8" width="21" height="20.5" rx="2" fill="#fff" stroke="#000" stroke-width="1.4"/>
<rect x="4" y="3.2" width="16" height="1.1" fill="#8b1a1a"/>
<rect x="4" y="5.0" width="16" height="1.2" fill="#f5f55a"/>
<rect x="4" y="6.2" width="16" height="1.2" fill="#7ae07a"/>
<rect x="4" y="7.4" width="16" height="1.1" fill="#5a6af0"/>
<rect x="4" y="9.2" width="16" height="1.2" fill="#7af0a0"/>
<rect x="4" y="10.6" width="16" height="1.2" fill="#e65ae6"/>
<rect x="4" y="12.0" width="16" height="0.4" fill="#888"/>
<rect x="4" y="13.3" width="16" height="1.1" fill="#f060f0"/>
<rect x="4" y="15.3" width="16" height="1.0" fill="#8b1a1a"/>
<rect x="4" y="16.4" width="16" height="1.3" fill="#5ad2f0"/></svg>
<svg class="a" style="left:720px;top:57px" width="24" height="22" viewBox="0 0 24 22"><rect x="1.5" y="0.8" width="20.5" height="20.5" rx="2" fill="#fff" stroke="#000" stroke-width="1.4"/>
<g stroke="#8d8d8d" stroke-width="0.9"><path d="M4 3.5 H19.5 M4 5.5 H19.5 M4 7.5 H19.5 M4 9.5 H17 M4 11.5 H17 M4 13.5 H17 M4 15.5 H17 M4 17.5 H17"/></g>
<path d="M14.5 10 H22 L18.2 13.5 Z M14.5 15 H22 L18.2 18.5 Z" fill="#111"/></svg>
<svg class="a" style="left:777px;top:59px" width="20" height="21" viewBox="0 0 20 21"><defs><linearGradient id="rb777" x1="0" y1="0" x2="0" y2="1"><stop offset="0" stop-color="#fdfdfd"/><stop offset="1" stop-color="#e4e4e4"/></linearGradient></defs>
<rect x="1.3" y="1.8" width="17.4" height="17.2" rx="3.2" fill="#777"/><rect x="1.7" y="1.3" width="16.6" height="16.9" rx="2.9" fill="url(#rb777)" stroke="#cfcfcf" stroke-width="0.5"/><path d="M8.5 5.5 H11.5 V8.5 H14.5 V11.5 H11.5 V14.5 H8.5 V11.5 H5.5 V8.5 H8.5 Z" fill="#fff" stroke="#7a7a7a" stroke-width="0.9"/></svg>
<svg class="a" style="left:819px;top:59px" width="20" height="21" viewBox="0 0 20 21"><defs><linearGradient id="rb819" x1="0" y1="0" x2="0" y2="1"><stop offset="0" stop-color="#fdfdfd"/><stop offset="1" stop-color="#e4e4e4"/></linearGradient></defs>
<rect x="1.3" y="1.8" width="17.4" height="17.2" rx="3.2" fill="#777"/><rect x="1.7" y="1.3" width="16.6" height="16.9" rx="2.9" fill="url(#rb819)" stroke="#cfcfcf" stroke-width="0.5"/><rect x="4.5" y="8.2" width="11" height="3.6" fill="#fff" stroke="#777" stroke-width="0.9"/></svg>
<svg class="a" style="left:861px;top:59px" width="20" height="21" viewBox="0 0 20 21"><defs><linearGradient id="rb861" x1="0" y1="0" x2="0" y2="1"><stop offset="0" stop-color="#fdfdfd"/><stop offset="1" stop-color="#e4e4e4"/></linearGradient></defs>
<rect x="1.3" y="1.8" width="17.4" height="17.2" rx="3.2" fill="#777"/><rect x="1.7" y="1.3" width="16.6" height="16.9" rx="2.9" fill="url(#rb861)" stroke="#cfcfcf" stroke-width="0.5"/><path d="M6 7.5 L10 4.5 H12.5 V15 H9.5 V8 L7 9.5 Z" fill="#fff" stroke="#777" stroke-width="0.9"/></svg>
<svg class="a" style="left:902px;top:57px" width="24" height="23" viewBox="0 0 24 23"><rect x="1.5" y="1.5" width="20.5" height="20.5" fill="#f4f4f4" stroke="#000" stroke-width="1.4"/>
<rect x="2.2" y="2.2" width="19" height="4" fill="#c8c8c8"/>
<g stroke="#aaa" stroke-width="0.5"><path d="M7 2.2 V6.2 M12 2.2 V6.2 M17 2.2 V6.2"/></g>
<rect x="10.5" y="6.2" width="3" height="14.5" fill="#dcdcdc"/>
<path d="M2.5 9 H7 M5 7 L7.5 9 L5 11 M21 9 H17 M19 7 L16.5 9 L19 11" stroke="#3d5f85" stroke-width="1.2" fill="none"/></svg>
<svg class="a" style="left:954px;top:57px" width="26" height="25" viewBox="0 0 26 25"><defs><linearGradient id="fn" x1="0" y1="0" x2="1" y2="0"><stop offset="0" stop-color="#f4f8fc"/><stop offset="0.5" stop-color="#9cbde0"/><stop offset="1" stop-color="#5f8fc4"/></linearGradient></defs>
<path d="M0.8 7.5 H18.5 V19.5 H9 L8 23 H2 L0.8 19.5 Z" fill="#56784a" stroke="#111" stroke-width="1"/>
<rect x="2" y="9" width="5" height="4" fill="#aaa"/>
<g fill="#d8c070"><rect x="3" y="19.8" width="1.2" height="2.4"/><rect x="5" y="19.8" width="1.2" height="2.4"/><rect x="7" y="19.8" width="1.2" height="2.4"/></g>
<g fill="#c8b060" opacity="0.8"><rect x="2.5" y="15.5" width="2" height="1.2"/><rect x="5.5" y="15.5" width="2" height="1.2"/><rect x="8.5" y="16" width="2" height="1.2"/></g>
<rect x="13.5" y="9.5" width="1.2" height="3" fill="#c03a3a"/><rect x="15.5" y="9.5" width="1.2" height="3" fill="#c03a3a"/>
<path d="M20.5 1 V23.5 M20.5 1 L23 1.5" stroke="#111" stroke-width="1.3" fill="none"/>
<rect x="18.5" y="16" width="4" height="2.5" fill="#777" stroke="#111" stroke-width="0.5"/>
<path d="M0.6 1 H17.4 L11 8.5 V15.5 H7.2 V8.5 Z" fill="url(#fn)" stroke="#111" stroke-width="1"/></svg>
<svg class="a" style="left:996px;top:57px" width="24" height="23" viewBox="0 0 24 23"><rect x="1.5" y="1.5" width="20.5" height="19.5" rx="1.5" fill="#fff" stroke="#000" stroke-width="1.4"/>
<g stroke="#7a7a7a" stroke-width="1"><path d="M4 6.5 H19.5 M4 8.5 H19.5 M4 10.5 H19.5 M4 12.5 H19.5 M4 14.5 H19.5 M4 16.5 H19.5 M4 18.5 H19.5"/></g>
<path d="M3 2 H20.5 L12.7 10.5 V16.5 H10.3 V10.5 Z" fill="url(#fn)" stroke="#111" stroke-width="0.9"/></svg>
<svg class="a" style="left:1039px;top:58px" width="24" height="24" viewBox="0 0 24 24"><rect x="1" y="0.8" width="22" height="22" rx="1.5" fill="#eee" stroke="#aaa" stroke-width="0.6"/>
<rect x="1.5" y="1.2" width="7.4" height="7.4" fill="#de3a3a"/><rect x="8.9" y="1.2" width="6.6" height="7.4" fill="#84b4e6"/><rect x="15.5" y="1.2" width="7.1" height="7.4" fill="#f2d83a"/>
<rect x="1.5" y="8.6" width="7.4" height="6.9" fill="#c4a0cc"/><rect x="8.9" y="8.6" width="6.6" height="6.9" fill="#e2e2e2"/><rect x="15.5" y="8.6" width="7.1" height="6.9" fill="#f2953a"/>
<rect x="1.5" y="15.5" width="7.4" height="7" fill="#e4e4e0"/><rect x="8.9" y="15.5" width="6.6" height="7" fill="#7acc4a"/><rect x="15.5" y="15.5" width="7.1" height="7" fill="#84b4e6"/>
<path d="M10 20 L9 13 L10.5 12 L11 14 L11 4.5 Q12.5 3.5 13.5 4.5 L13.5 11 L15 10.5 L16.5 11 L18 11.5 L19 12.5 L19 17 L17.5 20 Z" fill="#f3c37a" stroke="#b07520" stroke-width="0.7"/>
<rect x="10.5" y="19" width="7" height="2.3" fill="#fff" stroke="#3a64a8" stroke-width="0.5"/></svg>
<svg class="a" style="left:1080px;top:58px" width="25" height="22" viewBox="0 0 25 22"><defs><linearGradient id="pf" x1="0" y1="0" x2="1" y2="0"><stop offset="0" stop-color="#dcdcd8"/><stop offset="0.5" stop-color="#f4f4f2"/><stop offset="1" stop-color="#dcdcd8"/></linearGradient></defs>
<rect x="1.5" y="1" width="22.5" height="20" rx="3" fill="url(#pf)" stroke="#d0d0cc" stroke-width="0.6"/>
<ellipse cx="12.5" cy="21" rx="10" ry="1" fill="#000" opacity="0.06"/>
<g stroke="#c8c8c4" stroke-width="0.6"><path d="M9 2 V20 M16 2 V20"/></g>
<g fill="#e8e8e4" stroke="#9a9a96" stroke-width="0.8"><rect x="4.2" y="8" width="2.6" height="5.5" rx="1"/><rect x="11.2" y="7.5" width="2.6" height="5" rx="1"/><rect x="18.2" y="8" width="2.6" height="5.5" rx="1"/></g></svg>
<svg class="a" style="left:1138px;top:57px" width="18" height="22" viewBox="0 0 18 22"><path d="M4.6 6.2 C6.2 4.8 7.6 4.3 9 4.3 C11.8 4.3 13.5 5.8 13.5 8 C13.5 10.6 10.6 11.6 9.6 14.6" stroke="#003b7c" stroke-width="2.7" fill="none"/>
<rect x="7.8" y="16" width="3.1" height="2.9" fill="#003b7c"/></svg>
<svg class="a" style="left:1px;top:1026px" width="16" height="18" viewBox="0 0 16 18"><defs><linearGradient id="yc" x1="0" y1="0" x2="0" y2="1"><stop offset="0" stop-color="#e8e688"/><stop offset="1" stop-color="#dcd858"/></linearGradient></defs><circle cx="8" cy="9" r="6.5" fill="url(#yc)" stroke="#6f6e3a" stroke-width="1"/></svg>
<svg class="a" style="left:19px;top:1024px" width="20" height="20" viewBox="0 0 20 20"><rect x="2.7" y="3.8" width="11.6" height="14.5" rx="1" fill="#fff" stroke="#666" stroke-width="1"/>
<path d="M5.1 4.1 H7.9 V6.1 H9.9 V8.9 H7.9 V10.9 H5.1 V8.9 H3.1 V6.1 H5.1 Z" fill="#3a9a0a"/>
<path d="M5.5 15.8 L15.5 5.5 L18 8 L8 18 Z" fill="#f0a040"/>
<path d="M6.5 14.8 L16 5.2" stroke="#fbd8a0" stroke-width="0.8"/>
<path d="M15.5 5.5 L17 4 L19 6.5 L18 8 Z" fill="#999"/>
<path d="M17 4 L18.2 2.8 L20 4.8 L19 6.5 Z" fill="#e83a3a"/>
<path d="M5.5 15.8 L8 18 L5 18.8 Z" fill="#222"/></svg>
</body></html>
